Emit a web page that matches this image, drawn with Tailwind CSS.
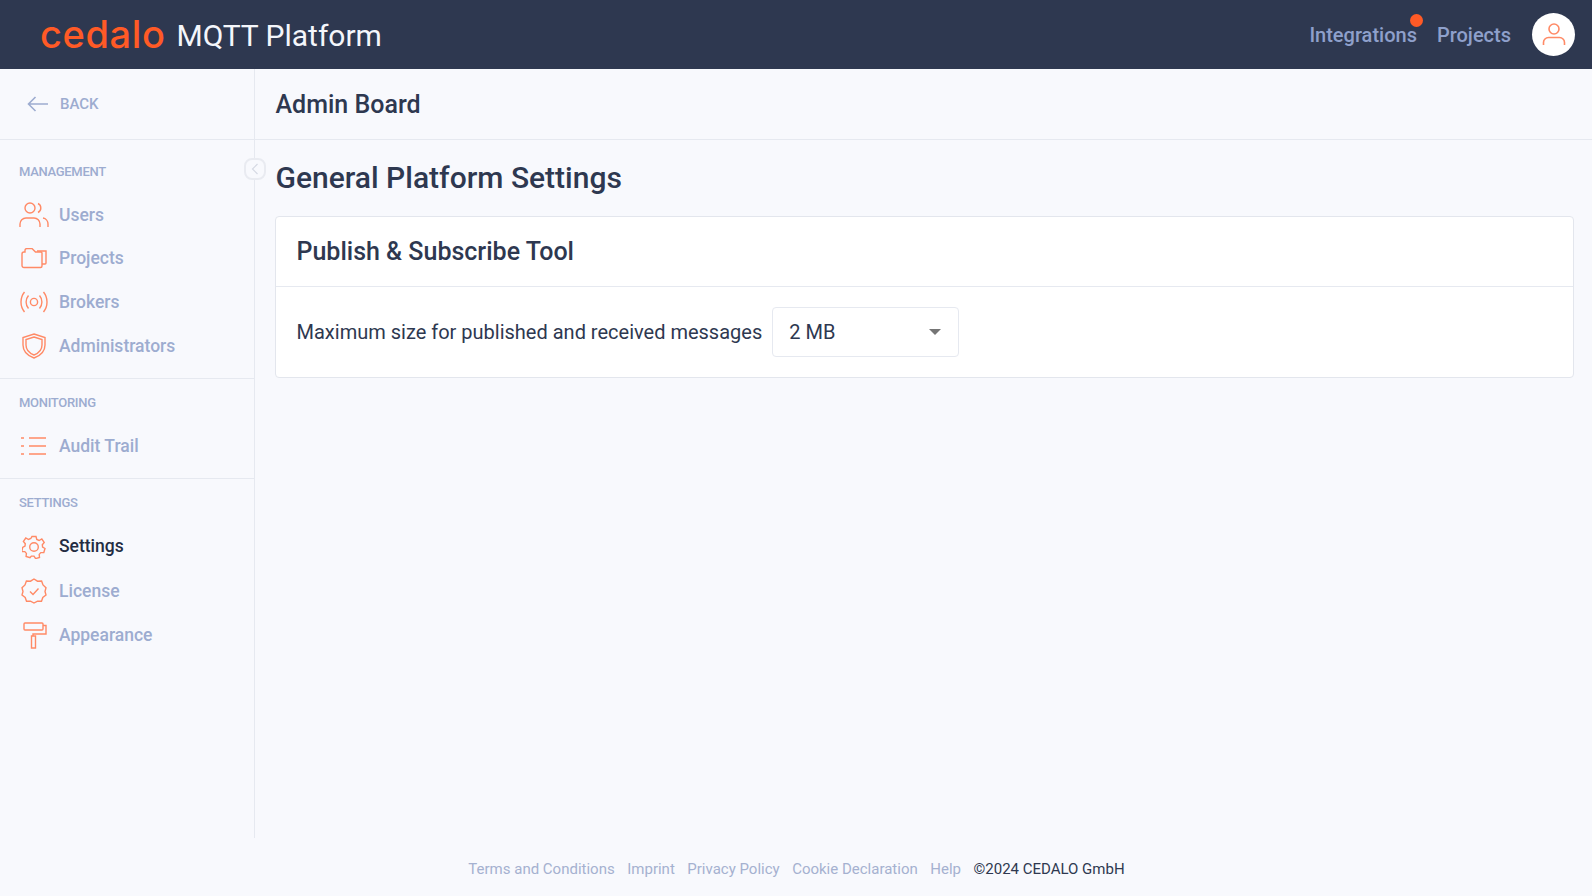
<!DOCTYPE html>
<html lang="en">
<head>
  <meta charset="UTF-8">
  <title>Cedalo MQTT Platform</title>
  <script src="https://cdn.jsdelivr.net/npm/@tailwindcss/browser@4"></script>
</head>
<body class="bg-[#f8f9fd] font-['Roboto',sans-serif] text-[#2e3850] h-[896px] w-[1592px] overflow-hidden">
  <!-- Navbar -->
  <nav class="h-[69px] bg-[#2e3850] flex items-center justify-between pl-[40px] pr-[17px]">
    <div class="flex items-center">
      <span class="font-['Inter',sans-serif] text-[38px] leading-none font-medium tracking-[0.6px] text-[#ff5a26] pb-[2px]">cedalo</span>
      <span class="ml-[11px] text-[30px] text-[#f4f6fb] relative top-[1px]">MQTT Platform</span>
    </div>
    <div class="flex items-center">
      <a class="relative text-[20px] font-medium text-[#8ea0cb]">Integrations<span class="absolute right-[-6px] top-[-6px] w-[13px] h-[13px] rounded-full bg-[#ff5a26]"></span></a>
      <a class="ml-[20px] text-[20px] font-medium text-[#8ea0cb]">Projects</a>
      <div class="ml-[21px] w-[43px] h-[43px] rounded-full bg-white flex items-center justify-center">
        <svg width="26" height="32" viewBox="0 0 26 32" fill="none" stroke="#ff8a66" stroke-width="1.6"><circle cx="13" cy="10" r="5"/><path d="M2.500 26v-2.500a5 5 0 0 1 5-5h11a5 5 0 0 1 5 5V26"/></svg>
      </div>
    </div>
  </nav>

  <div class="flex h-[769px]">
    <!-- Sidebar -->
    <aside class="relative w-[255px] border-r border-[#e6e9f0] shrink-0">
      <a class="h-[71px] flex items-center pl-[27px] border-b border-[#e6e9f0] font-medium text-[#9dacd0]">
        <svg width="22" height="16" viewBox="0 0 22 16" fill="none" stroke="#9dacd0" stroke-width="1.6"><path d="M21 8H1.500M8.500 1 1.500 8l7 7"/></svg>
        <span class="ml-[11px] text-[15px]">BACK</span>
      </a>
      <span class="absolute right-[-12px] top-[89px] w-[22px] h-[22px] rounded-[8px] border-2 border-[#e9ebf1] bg-[#f8f9fd] flex items-center justify-center">
        <svg width="8" height="12" viewBox="0 0 8 12" fill="none" stroke="#d5d9e3" stroke-width="1.2"><path d="M6.500 1 1.500 6l5 5"/></svg>
      </span>

      <section class="h-[239px] border-b border-[#e6e9f0] pt-[23px]">
        <h3 class="pl-[19px] text-[13px] leading-[18px] font-medium text-[#9dacd0] tracking-[-0.3px]">MANAGEMENT</h3>
        <ul class="mt-[12px] text-[17.5px] font-medium text-[#9dacd0]">
          <li class="h-[44px] flex items-center">
            <svg class="ml-[19px] w-[30px] h-[26px]" viewBox="0 0 30 26" fill="none" stroke="#ff8a66" stroke-width="1.400"><circle cx="11" cy="6" r="5"/><path d="M1 25v-3a6 6 0 0 1 6-6h8a6 6 0 0 1 6 6v3M19 1.500a5 5 0 0 1 0 9M24 16a6 6 0 0 1 5 6v3"/></svg>
            <span class="ml-[10px]">Users</span>
          </li>
          <li class="h-[43px] flex items-center">
            <svg class="ml-[21px] w-[26px] h-[22px]" viewBox="0 0 26 22" fill="none" stroke="#ff8a66" stroke-width="1.400"><path d="M1 6a2 2 0 0 1 2-2h1V2.500a2 2 0 0 1 2-2h5L14.500 4H20a1 1 0 0 1 1 1v13a1.500 1.500 0 0 1-1.500 1.500H3a2 2 0 0 1-2-2Z"/><path d="M16 3h9v12a1 1 0 0 1-1 1h-3"/></svg>
            <span class="ml-[12px]">Projects</span>
          </li>
          <li class="h-[44px] flex items-center">
            <svg class="ml-[20px] w-[28px] h-[22px]" viewBox="0 0 28 22" fill="none" stroke="#ff8a66" stroke-width="1.400"><circle cx="14" cy="11" r="3.600"/><path d="M8.500 4.500a10 10 0 0 0 0 13M19.500 4.500a10 10 0 0 1 0 13M4.500 1a16 16 0 0 0 0 20M23.500 1a16 16 0 0 1 0 20"/></svg>
            <span class="ml-[11px]">Brokers</span>
          </li>
          <li class="h-[44px] flex items-center">
            <svg class="ml-[22px] w-[24px] h-[26px]" viewBox="0 0 24 26" fill="none" stroke="#ff8a66" stroke-width="1.400"><path d="M12 1 23 4.500V12c0 6-4 10.500-11 13C5 22.500 1 18 1 12V4.500Z"/><path d="M12 4 20 6.500V12c0 4.500-3 8-8 10-5-2-8-5.500-8-10V6.500Z"/></svg>
            <span class="ml-[13px]">Administrators</span>
          </li>
        </ul>
      </section>

      <section class="h-[100px] border-b border-[#e6e9f0] pt-[15px]">
        <h3 class="pl-[19px] text-[13px] leading-[18px] font-medium text-[#9dacd0] tracking-[-0.3px]">MONITORING</h3>
        <ul class="mt-[12px] text-[17.5px] font-medium text-[#9dacd0]">
          <li class="h-[44px] flex items-center">
            <svg class="ml-[21px] w-[25px] h-[18px]" viewBox="0 0 25 18" fill="none" stroke="#ff8a66" stroke-width="1.400"><path d="M0 1h3M0 9h3M0 17h3M8 1h17M8 9h17M8 17h17"/></svg>
            <span class="ml-[13px]">Audit Trail</span>
          </li>
        </ul>
      </section>

      <section class="pt-[15px]">
        <h3 class="pl-[19px] text-[13px] leading-[18px] font-medium text-[#9dacd0] tracking-[-0.3px]">SETTINGS</h3>
        <ul class="mt-[12px] text-[17.5px] font-medium text-[#9dacd0]">
          <li class="h-[45px] flex items-center">
            <svg class="ml-[22px] w-[24px] h-[24px]" viewBox="0 0 24 24" fill="none" stroke="#ff8a66" stroke-width="1.400"><circle cx="12" cy="12" r="4.300"/><path d="M10 1.500h4l.8 3 2.300 1 2.700-1.500 2.400 3.400-1.900 2.300.3 2.300 2.400 1.500-1.200 4-3 .1-1.600 1.800.3 3-3.900 1.200-1.600-2.500h-2.600L8 22.600l-3.900-1.200.3-3-1.600-1.800-3-.1L.6 12.500 3 11l.3-2.300L1.400 6.400l2.400-3.400L6.500 4.500l2.300-1Z"/></svg>
            <span class="ml-[13px] text-[#232c42]">Settings</span>
          </li>
          <li class="h-[44px] flex items-center">
            <svg class="ml-[21px] w-[26px] h-[26px]" viewBox="0 0 26 26" fill="none" stroke="#ff8a66" stroke-width="1.400"><path d="M13 1l3.500 2.200 4.100-.2 1.400 3.900 3 2.800L24 13.500l1 3.600-3.200 2.400-1.300 3.700-4-.1L13 25l-3.500-1.900-4 .1-1.300-3.700L1 17.100l1-3.600L1 9.700l3-2.800L5.400 3l4.100.2Z"/><path d="M9 13.500l3 3 5.500-6"/></svg>
            <span class="ml-[12px]">License</span>
          </li>
          <li class="h-[45px] flex items-center">
            <svg class="ml-[23px] w-[24px] h-[27px]" viewBox="0 0 24 27" fill="none" stroke="#ff8a66" stroke-width="1.400"><rect x="1" y="1" width="19" height="7" rx="1"/><path d="M20 3.500h3V12H10v2M8.500 14h4v12h-4Z"/></svg>
            <span class="ml-[12px]">Appearance</span>
          </li>
        </ul>
      </section>
    </aside>

    <!-- Main Content -->
    <main class="flex-1">
      <div class="h-[71px] border-b border-[#e6e9f0] flex items-center pl-[20.5px]">
        <h1 class="text-[25px] font-medium relative top-[1px]">Admin Board</h1>
      </div>
      <div class="pl-[20px] pr-[18px]">
        <h2 class="mt-[18px] mb-[18px] pl-[0.5px] text-[30px] leading-[40px] font-medium">General Platform Settings</h2>
        <div class="bg-white border border-[#e3e6ed] rounded-[4px]">
          <div class="h-[70px] border-b border-[#e6e9f0] flex items-center pl-[20.5px]">
            <h3 class="text-[25px] font-medium">Publish &amp; Subscribe Tool</h3>
          </div>
          <div class="h-[90px] flex items-center pl-[20.5px]">
            <span class="text-[20px]">Maximum size for published and received messages</span>
            <div class="ml-[9.5px] w-[187px] h-[50px] border border-[#e6e9f0] rounded-[4px] flex items-center justify-between pl-[16.5px] pr-[17px]">
              <span class="text-[20px]">2 MB</span>
              <span class="w-0 h-0 border-x-[6px] border-x-transparent border-t-[6px] border-t-[#757575]"></span>
            </div>
          </div>
        </div>
      </div>
    </main>
  </div>

  <!-- Footer -->
  <footer class="h-[58px] pt-[4px] pl-[1px] flex items-center justify-center text-[15px] text-[#a5b1d0] gap-[12.5px]">
    <a>Terms and Conditions</a>
    <a>Imprint</a>
    <a>Privacy Policy</a>
    <a>Cookie Declaration</a>
    <a>Help</a>
    <span class="text-[#2e3850]">©2024 CEDALO GmbH</span>
  </footer>
</body>
</html>
